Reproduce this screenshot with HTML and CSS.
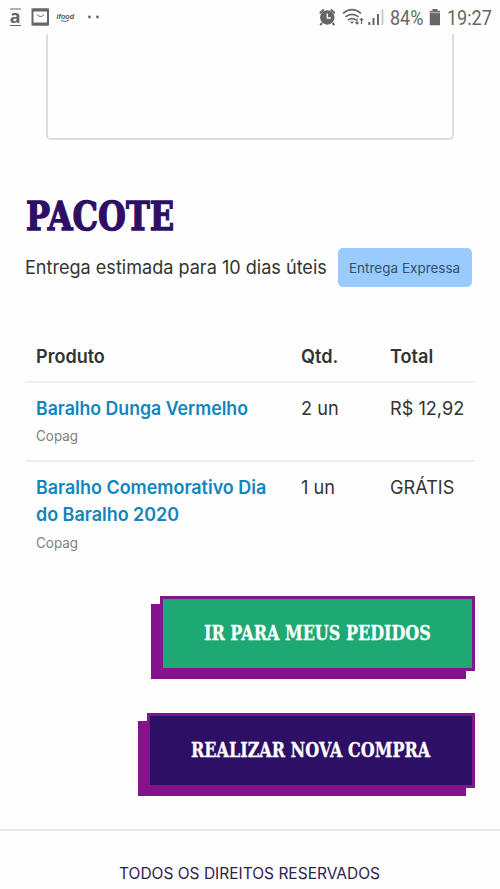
FILE: index.html
```html
<!DOCTYPE html>
<html lang="pt-BR">
<head>
<meta charset="utf-8">
<title>Pacote</title>
<link rel="stylesheet" href="styles.css">
</head>
<body>
<header class="status">
  <div class="status-left">
    <svg class="ic-left" width="104" height="36" viewBox="0 0 104 36" fill="none" stroke="#666">
      <path d="M10 9h11M10 25.500h11" stroke-width="1.200"/>
      <text class="glyph-a" x="9.800" y="22.500" textLength="10.800" lengthAdjust="spacingAndGlyphs">a</text>
      <path d="M32.500 9.500h15.500v15H32.500z" stroke-width="2"/>
      <path d="M33 10h14.500M33 24h14.500" stroke-width="3"/>
      <path d="M37 14.500q3.500 4 7 0" stroke-width="1"/>
      <text class="glyph-ifood" x="56.500" y="18.500" textLength="17.500" lengthAdjust="spacingAndGlyphs">ifood</text>
      <path d="M61 20.500q5 2.500 8-.5" stroke-width="1"/>
      <circle cx="89.500" cy="17" r="1.400" fill="#666" stroke="none"/>
      <circle cx="97.500" cy="17" r="1.400" fill="#666" stroke="none"/>
    </svg>
  </div>
  <div class="status-right">
    <svg class="ic-right" width="66" height="36" viewBox="318 0 66 36" fill="none" stroke="#666">
      <circle cx="327.300" cy="17.500" r="7.200" fill="#666" stroke="none"/>
      <path d="M319.800 13.200l4-3.600M334.800 13.200l-4-3.600M322 23l-1.800 2.200M332.600 23l1.800 2.200" stroke-width="2"/>
      <path d="M327.300 13.500v4.500h3.500" stroke="#fff" stroke-width="1.300"/>
      <path d="M343 13.400q9-7.400 18 0M345.500 16.900q6.500-5 13 0M348 20.100q4-3 8 0" stroke-width="1.700"/>
      <path d="M350 21.500h4l-2 2.500z" fill="#666" stroke="none"/>
      <path d="M357 18.500v5.500M355.300 22.300l1.700 1.700 1.700-1.700M361.500 24v-5.500M359.800 20.200l1.700-1.700 1.700 1.700" stroke-width="1.200"/>
      <path d="M369.300 25v-3M373.500 25v-7M378 25v-11" stroke-width="2"/>
      <path d="M382.500 25V9.500" stroke="#ccc" stroke-width="2"/>
    </svg>
    <span class="pct"><span class="fit">84%</span></span>
    <svg class="ic-bat" width="12" height="36" viewBox="0 0 12 36"><path d="M3.500 9h5v1.700h2.500v14.500H.8V10.700h2.700z" fill="#666"/><path d="M.8 12.500H11" stroke="#aaa" stroke-width="1.500"/></svg>
    <span class="clock"><span class="fit">19:27</span></span>
  </div>
</header>
<main>
  <div class="panel"></div>
  <h1><span class="fit">PACOTE</span></h1>
  <div class="delivery">
    <p class="estimate"><span class="fit">Entrega estimada para 10 dias úteis</span></p>
    <span class="badge"><span class="fit">Entrega Expressa</span></span>
  </div>
  <section class="items">
    <div class="row head"><div><span class="fit">Produto</span></div><div><span class="fit">Qtd.</span></div><div><span class="fit">Total</span></div></div>
    <div class="row">
      <div><a class="name"><span class="fit n1">Baralho Dunga Vermelho</span></a><small class="brand"><span class="fit">Copag</span></small></div>
      <div><span class="fit">2 un</span></div><div><span class="fit">R$ 12,92</span></div>
    </div>
    <div class="row">
      <div><a class="name"><span class="fit n2">Baralho Comemorativo Dia<br>do Baralho 2020</span></a><small class="brand"><span class="fit">Copag</span></small></div>
      <div><span class="fit">1 un</span></div><div><span class="fit">GRÁTIS</span></div>
    </div>
  </section>
  <div class="actions">
    <a class="btn orders"><span class="fit">IR PARA MEUS PEDIDOS</span></a>
    <a class="btn buy"><span class="fit">REALIZAR NOVA COMPRA</span></a>
  </div>
</main>
<footer><span class="fit">TODOS OS DIREITOS RESERVADOS</span></footer>
</body>
</html>
```
FILE: styles.css
```css
* { box-sizing: border-box; }
body { margin: 0; height: 889px; overflow: hidden; background: #fefefe; color: #333; font-family: Inter, sans-serif; font-size: 18.5px; }
.fit { display: inline-block; white-space: nowrap; transform-origin: 0 50%; }
.status { height: 34px; display: flex; justify-content: space-between; }
.status svg { display: block; }
.status-right { display: flex; width: 182px; font-family: Roboto, sans-serif; color: #666; font-size: 20px; line-height: 36px; }
.glyph-a { font: bold 18px "Open Sans", sans-serif; fill: #666; stroke: none; }
.glyph-ifood { font: italic bold 8px "Liberation Sans", sans-serif; fill: #555; stroke: none; }
.pct { width: 45px; padding-left: 6px; }
.pct .fit, .clock .fit { transform: scaleX(.9); }
.clock { padding-left: 6px; }
.panel { width: 408px; height: 106px; margin: 0 46px; border: 2px solid #ddd; border-top: 0; border-radius: 0 0 5px 5px; }
h1 { margin: 50px 0 0 26px; height: 52px; color: #2d1065; font: bold 40px/52px "DejaVu Serif", serif; }
h1 .fit { transform: scaleX(.8); -webkit-text-stroke: 1.4px #2d1065; }
.delivery { margin: 6px 28px 0 25px; height: 40px; display: flex; justify-content: space-between; }
.estimate { margin: 0; line-height: 38px; width: 302px; }
.estimate .fit { transform: scaleX(.977); }
.badge { width: 134px; height: 39px; border-radius: 5px; background: #99cbff; color: #34506e; font-size: 13.5px; line-height: 40px; padding-left: 11px; }
.items { margin: 43px 25px 0; line-height: 27.4px; }
.row { display: grid; grid-template-columns: 265px 89px 96px; padding: 12px 0 10px; border-top: 2px solid #eee; }
.row > div { padding-left: 11px; }
.row > div:nth-child(n+2) .fit { transform: scaleX(.98); }
.head { height: 50px; border: 0; font-weight: 600; }
.head > div:first-child .fit { transform: scaleX(.975); }
.row:nth-child(2) { height: 79px; }
.name { display: block; color: #1185bd; font-weight: 600; }
.n1 { transform: scaleX(.957); }
.n2 { transform: scaleX(.969); }
.brand { display: block; color: #808080; font-size: 14px; }
.brand .fit { transform: scaleX(.96); }
.actions { margin: 30px 25px 0 0; display: flex; flex-direction: column; align-items: flex-end; gap: 42px; }
.btn { height: 75px; border: 3px solid #81158a; box-shadow: -9px 8px 0 #86118d; color: #fff; font: bold 20px/69px "DejaVu Serif", serif; padding-left: 41px; }
.orders { width: 315px; background: #1da874; }
.buy { width: 328px; background: #2d1065; }
.btn .fit { transform: scaleX(.8); -webkit-text-stroke: .3px #fff; }
footer { margin-top: 41px; border-top: 2px solid #e8e8e8; padding: 29px 0 0 119px; height: 60px; color: #30204f; font-size: 15.5px; line-height: 28px; }
```
